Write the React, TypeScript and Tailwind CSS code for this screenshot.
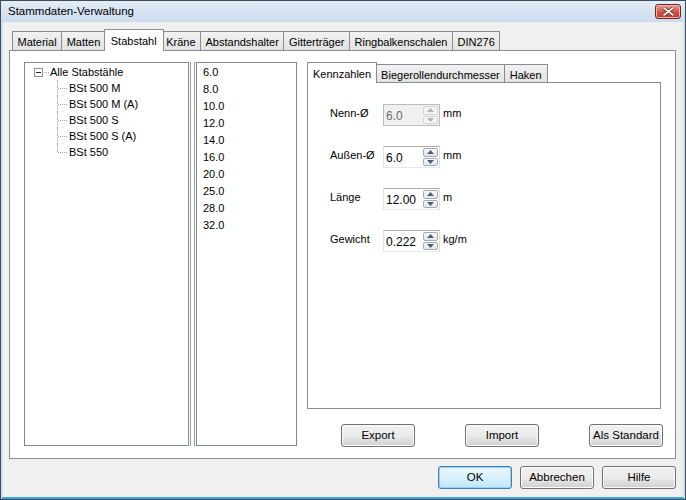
import React from "react";

const tabs = [
  "Material",
  "Matten",
  "Stabstahl",
  "Kräne",
  "Abstandshalter",
  "Gitterträger",
  "Ringbalkenschalen",
  "DIN276",
];

const steels = ["BSt 500 M", "BSt 500 M (A)", "BSt 500 S", "BSt 500 S (A)", "BSt 550"];
const diameters = ["6.0", "8.0", "10.0", "12.0", "14.0", "16.0", "20.0", "25.0", "28.0", "32.0"];

const fields = [
  { label: "Nenn-Ø", value: "6.0", unit: "mm", disabled: true },
  { label: "Außen-Ø", value: "6.0", unit: "mm" },
  { label: "Länge", value: "12.00", unit: "m" },
  { label: "Gewicht", value: "0.222", unit: "kg/m" },
];

const Arrow = ({ up, disabled }: { up?: boolean; disabled?: boolean }) => (
  <svg width="7" height="4" viewBox="0 0 7 4">
    <path
      d={up ? "M0 4 L3.5 0 L7 4 Z" : "M0 0 L3.5 4 L7 0 Z"}
      fill={disabled ? "#b4b4b4" : "#4a5d80"}
    />
  </svg>
);

const SpinBox = ({ value, disabled }: { value: string; disabled?: boolean }) => (
  <div
    className={`flex h-[22px] w-[57px] items-stretch border ${
      disabled
        ? "border-[#b9bcc0] bg-[#f0f0f0]"
        : "border-[#abadb3] border-b-[#e3e9ef] border-l-[#e2e3ea] border-r-[#dbdfe6] bg-white"
    }`}
  >
    <div className={`flex-1 pl-[2px] pt-[5px] text-[12px] leading-none ${disabled ? "text-[#6d6d6d]" : "text-black"}`}>
      {value}
    </div>
    <div className="flex w-[16px] flex-col gap-[1px] py-[1px] pr-[1px]">
      {[true, false].map((up) => (
        <div
          key={String(up)}
          className={`flex flex-1 items-center justify-center rounded-[2px] border ${
            disabled
              ? "border-[#d5d5d5] bg-[#f4f4f4]"
              : "border-[#a7abb0] bg-gradient-to-b from-[#f9f9f9] to-[#e2e4e8]"
          }`}
        >
          <Arrow up={up} disabled={disabled} />
        </div>
      ))}
    </div>
  </div>
);

const Button = ({ children, primary }: { children: React.ReactNode; primary?: boolean }) => (
  <div
    className={`flex h-[23px] w-[74px] items-center justify-center rounded-[3px] border text-[11.5px] ${
      primary
        ? "border-[#3c7fb1] bg-gradient-to-b from-[#eaf6fd] via-[#d9f0fc] to-[#bee6fd] shadow-[inset_0_0_0_1px_#98d2f0]"
        : "border-[#707070] bg-gradient-to-b from-[#f2f2f2] via-[#ebebeb] to-[#cfcfcf] shadow-[inset_0_0_0_1px_#fcfcfc]"
    }`}
  >
    {children}
  </div>
);

const Tab = ({ label, active }: { label: string; active?: boolean }) => (
  <div
    className={
      active
        ? "relative z-10 -mx-[2px] mb-[-1px] flex h-[22px] items-start border border-b-0 border-[#898c95] bg-white px-[6px] pt-[3px]"
        : "flex h-[19px] items-start border border-b-0 border-l-0 border-[#898c95] bg-gradient-to-b from-[#f2f2f2] to-[#e2e2e2] px-[4.5px] pt-[2px] first:border-l"
    }
  >
    {label}
  </div>
);

export default function App() {
  return (
    <div className="flex h-[500px] w-[686px] flex-col border border-[#3e4c5c] font-['Liberation_Sans',Arial,sans-serif] text-[11px] text-black">
      <div className="flex h-[21px] items-center justify-between bg-gradient-to-b from-[#e4edf8] to-[#cbdbef] pl-[7px] pr-[4px]">
        <span className="pt-[1px] text-[11.5px]">Stammdaten-Verwaltung</span>
        <div className="flex h-[15px] w-[26px] items-center justify-center rounded-[3px] border border-[#6d2a22] bg-gradient-to-b from-[#e8a093] via-[#d0574a] to-[#c0392b] shadow-[inset_0_0_0_1px_#f0b4aa]">
          <svg width="11" height="9" viewBox="0 0 11 9">
            <path d="M1 1 L10 8 M10 1 L1 8" stroke="#5a1a14" strokeWidth="3" strokeLinecap="round" />
            <path d="M1 1 L10 8 M10 1 L1 8" stroke="#ffffff" strokeWidth="1.6" strokeLinecap="round" />
          </svg>
        </div>
      </div>
      <div className="flex flex-1 flex-col border-x-2 border-b-2 border-[#cfe0f2] border-b-[#35a9dc] bg-[#f0f0f0] pl-[6px] pr-[6px] pt-[6px]">
        <div className="flex h-[22px] items-end pl-[3px]">
          {tabs.map((t) => (
            <Tab key={t} label={t} active={t === "Stabstahl"} />
          ))}
        </div>
        <div className="flex h-[409px] w-[667px] border border-[#898c95] bg-white pl-[14px] pt-[11px]">
          <div className="flex h-[384px]">
            <div className="w-[165px] border border-[#828790] pt-[1px]">
              <div className="flex h-[16px] items-center pl-[9px]">
                <div className="flex h-[9px] w-[9px] items-center justify-center border border-[#919191] bg-white">
                  <div className="h-px w-[5px] bg-[#202020]" />
                </div>
                <div className="ml-px w-[5px] border-t border-dotted border-[#a0a0a0]" />
                <span className="ml-[1px]">Alle Stabstähle</span>
              </div>
              {steels.map((s, i) => (
                <div key={s} className="flex h-[16px] items-center">
                  <div className="relative ml-[32px] h-full w-px">
                    <div
                      className={`absolute left-0 top-0 border-l border-dotted border-[#a0a0a0] ${
                        i === steels.length - 1 ? "h-[8px]" : "h-full"
                      }`}
                    />
                  </div>
                  <div className="w-[9px] border-t border-dotted border-[#a0a0a0]" />
                  <span className="ml-[2px]">{s}</span>
                </div>
              ))}
            </div>
            <div className="mx-px flex w-[5px] justify-between">
              <div className="w-px bg-[#9a9a9a]" />
              <div className="w-px bg-[#9a9a9a]" />
            </div>
            <div className="w-[101px] border border-[#828790] pl-[6px] pt-[1px]">
              {diameters.map((d) => (
                <div key={d} className="flex h-[17px] items-center">
                  {d}
                </div>
              ))}
            </div>
          </div>
          <div className="ml-[10px] flex flex-col">
            <div className="flex h-[20px] items-end pl-[2px]">
              <div className="relative z-10 -ml-[2px] mb-[-1px] flex h-[21px] items-start border border-b-0 border-[#898c95] bg-white px-[5px] pt-[3px]">
                Kennzahlen
              </div>
              <div className="flex h-[18px] items-start border border-b-0 border-l-0 border-[#898c95] bg-gradient-to-b from-[#f2f2f2] to-[#e2e2e2] px-[4px] pt-[2px]">
                Biegerollendurchmesser
              </div>
              <div className="flex h-[18px] items-start border border-b-0 border-l-0 border-[#898c95] bg-gradient-to-b from-[#f2f2f2] to-[#e2e2e2] px-[5px] pt-[2px]">
                Haken
              </div>
            </div>
            <div className="flex h-[327px] w-[354px] flex-col gap-[20px] border border-[#898c95] pl-[22px] pt-[21px]">
              {fields.map((f) => (
                <div key={f.label} className="flex items-start">
                  <span className="mt-[1px] w-[53px]">{f.label}</span>
                  <SpinBox value={f.value} disabled={f.disabled} />
                  <span className="ml-[3px] mt-[1px]">{f.unit}</span>
                </div>
              ))}
            </div>
            <div className="mt-[15px] flex w-[356px] justify-between pl-[34px]">
              <Button>Export</Button>
              <Button>Import</Button>
              <Button>Als Standard</Button>
            </div>
          </div>
        </div>
        <div className="mt-[7px] flex justify-end gap-[8px] pr-[1px]">
          <Button primary>OK</Button>
          <Button>Abbrechen</Button>
          <Button>Hilfe</Button>
        </div>
      </div>
    </div>
  );
}
